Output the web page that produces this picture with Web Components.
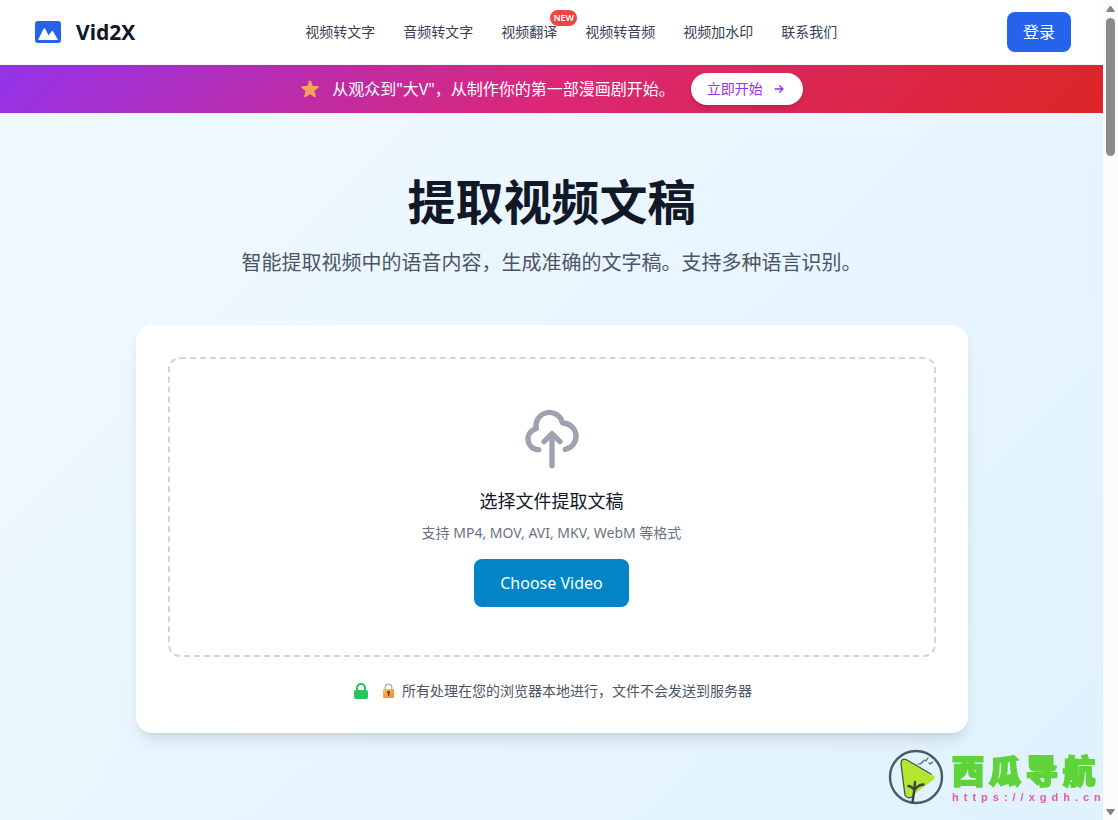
<!DOCTYPE html>
<html lang="zh-CN">
<head>
<meta charset="utf-8">
<meta name="viewport" content="width=device-width, initial-scale=1">
<title>Vid2X - 提取视频文稿</title>
<style>
  html, body { margin: 0; height: 100%; }
  body {
    font-family: "Noto Sans", "Noto Sans CJK SC", sans-serif;
    font-size: 16px; line-height: 24px; color: #111827; background: #fff;
  }
</style>
</head>
<body>
<page-shell>
  <site-header>
    <nav-item href="#video-text">视频转文字</nav-item>
    <nav-item href="#audio-text">音频转文字</nav-item>
    <nav-item href="#translate" badge="NEW">视频翻译</nav-item>
    <nav-item href="#video-audio">视频转音频</nav-item>
    <nav-item href="#watermark">视频加水印</nav-item>
    <nav-item href="#contact">联系我们</nav-item>
  </site-header>
  <promo-banner>从观众到"大V"，从制作你的第一部漫画剧开始。<span slot="action">立即开始</span></promo-banner>
  <hero-section>
    <span slot="title">提取视频文稿</span>
    <span slot="subtitle">智能提取视频中的语音内容，生成准确的文字稿。支持多种语言识别。</span>
    <upload-card>
      <span slot="title">选择文件提取文稿</span>
      <span slot="formats">支持 MP4, MOV, AVI, MKV, WebM 等格式</span>
      <span slot="button">Choose Video</span>
      <privacy-note slot="note">所有处理在您的浏览器本地进行，文件不会发送到服务器</privacy-note>
    </upload-card>
  </hero-section>
  <scroll-rail slot="rail"></scroll-rail>
</page-shell>
<site-mark></site-mark>

<script>
const define = (name, html, setup) => {
  const template = document.createElement('template');
  template.innerHTML = html;
  customElements.define(name, class extends HTMLElement {
    constructor() {
      super();
      this.attachShadow({ mode: 'open' }).append(template.content.cloneNode(true));
    }
    connectedCallback() { if (setup) setup(this, this.shadowRoot); }
  });
};

define('page-shell', `
  <style>
    :host { display: grid; grid-template-columns: minmax(0, 1fr) 15px; min-height: 100vh; }
    .page { display: flex; flex-direction: column; }
  </style>
  <div class="page"><slot></slot></div>
  <slot name="rail"></slot>`);

define('scroll-rail', `
  <style>
    :host { display: flex; flex-direction: column; align-items: center; gap: 5px;
      box-sizing: border-box; height: 100vh; padding: 5px 0 4px; position: sticky; top: 0; background: #fcfcfc; }
    svg { display: block; width: 9px; height: 8px; fill: #858585; flex: none; }
    .track { flex: 1; }
    .thumb { width: 9px; height: 17%; border-radius: 5px; background: #8b8b8b; }
  </style>
  <svg viewBox="0 0 9 8" aria-hidden="true"><path d="M4 1q.5-.6 1 0l3.8 5.2q.3.8-.6.8H.8q-.9 0-.6-.8z"/></svg>
  <div class="thumb"></div>
  <div class="track"></div>
  <svg viewBox="0 0 9 8" aria-hidden="true"><path d="M4 7q.5.6 1 0l3.800-5.200q.3-.8-.6-.8H.8q-.9 0-.6.8z"/></svg>`);

define('site-header', `
  <style>
    :host { display: block; background: #fff; border-bottom: 1px solid #f3f4f6; }
    header { display: flex; align-items: center; justify-content: space-between; height: 64px; padding: 0 32px; }
    .brand { display: flex; align-items: center; gap: 12px; color: #111827; text-decoration: none;
      font-size: 21px; line-height: 28px; font-weight: 700; }
    .brand svg { width: 32px; height: 32px; display: block; }
    nav { display: flex; gap: 28px; }
    button { border: 0; border-radius: 8px; background: #2563eb; color: #fff; font: inherit;
      padding: 8px 16px; cursor: pointer; }
  </style>
  <header>
    <a class="brand" href="#home">
      <svg viewBox="0 0 32 32" aria-hidden="true">
        <rect x="3" y="5" width="26" height="22" rx="3" fill="#2563eb"/>
        <path d="M6 24 11.600 12.800q.8-1.300 1.600 0L16.500 19.500l3.200-4.200q.7-.9 1.300 0L26 24z" fill="#fff"/>
      </svg>
      <span>Vid2X</span>
    </a>
    <nav><slot></slot></nav>
    <button type="button">登录</button>
  </header>`);

define('nav-item', `
  <style>
    :host { display: block; position: relative; font-size: 14px; line-height: 20px; }
    a { color: #374151; text-decoration: none; white-space: nowrap; }
    .badge { position: absolute; top: -12px; right: -20px; padding: 0 3px; border-radius: 8px;
      background: #ef4444; color: #fff; font-size: 9px; line-height: 16px; font-weight: 600; }
    .badge:empty { display: none; }
  </style>
  <a><slot></slot></a><span class="badge"></span>`,
  (host, root) => {
    root.querySelector('a').href = host.getAttribute('href') || '#';
    root.querySelector('.badge').textContent = host.getAttribute('badge') || '';
  });

define('promo-banner', `
  <style>
    :host { display: flex; align-items: center; justify-content: center; gap: 16px; padding: 8px 16px;
      background: linear-gradient(135deg, #9333ea, #db2777 50%, #dc2626); color: #fff; }
    .message { display: flex; align-items: center; gap: 12px; }
    .star { width: 20px; height: 20px; fill: #f3a35f; display: block; }
    a { display: flex; align-items: center; gap: 8px; padding: 6px 16px; border-radius: 16px; background: #fff;
      color: #9333ea; font-size: 14px; line-height: 20px; text-decoration: none; white-space: nowrap;
      box-shadow: 0 4px 6px -1px rgb(0 0 0 / .1), 0 2px 4px -2px rgb(0 0 0 / .1); }
    a svg { width: 16px; height: 16px; display: block; }
  </style>
  <div class="message">
    <svg class="star" viewBox="2 1 16 17" aria-hidden="true"><path d="M9.049 2.927c.3-.921 1.603-.921 1.902 0l1.07 3.292a1 1 0 00.95.69h3.462c.969 0 1.371 1.24.588 1.81l-2.8 2.034a1 1 0 00-.364 1.118l1.07 3.292c.3.921-.755 1.688-1.54 1.118l-2.8-2.034a1 1 0 00-1.175 0l-2.8 2.034c-.784.57-1.838-.197-1.539-1.118l1.07-3.292a1 1 0 00-.364-1.118L2.98 8.72c-.783-.57-.38-1.81.588-1.81h3.461a1 1 0 00.951-.69l1.07-3.292z"/></svg>
    <span><slot></slot></span>
  </div>
  <a href="#start"><slot name="action"></slot>
    <svg viewBox="0 0 24 24" fill="none" stroke="currentColor" stroke-width="2" stroke-linecap="round" stroke-linejoin="round" aria-hidden="true"><path d="M13 7l5 5m0 0l-5 5m5-5H6"/></svg>
  </a>`);

define('hero-section', `
  <style>
    :host { display: block; flex: 1; background: linear-gradient(135deg, #f0f9ff, #e0f2fe); }
    main { max-width: 832px; margin: 0 auto; padding: 64px 32px; }
    .intro { text-align: center; margin-bottom: 48px; }
    h1 { margin: 0 0 22px; font-size: 48px; line-height: 50px; font-weight: 700; color: #111827; }
    p { margin: 0; font-size: 20px; line-height: 28px; color: #4b5563; }
  </style>
  <main>
    <div class="intro">
      <h1><slot name="title"></slot></h1>
      <p><slot name="subtitle"></slot></p>
    </div>
    <slot></slot>
  </main>`);

define('upload-card', `
  <style>
    :host { display: block; padding: 32px; border-radius: 16px; background: #fff;
      box-shadow: 0 10px 15px -3px rgb(0 0 0 / .1), 0 4px 6px -4px rgb(0 0 0 / .1); }
    .drop { display: flex; flex-direction: column; align-items: center; padding: 48px;
      border: 2px dashed #d1d5db; border-radius: 12px; text-align: center; }
    svg { width: 64px; height: 64px; display: block; color: #9ca3af; }
    h2 { margin: 16px 0 8px; font-size: 18px; line-height: 28px; font-weight: 400; color: #111827; }
    p { margin: 0 0 16px; font-size: 14px; line-height: 20px; color: #6b7280; }
    button { border: 0; border-radius: 8px; background: #0284c7; color: #fff; font: inherit;
      padding: 12px 26px; cursor: pointer; }
    .note { margin-top: 24px; }
  </style>
  <div class="drop">
    <svg viewBox="0 0 24 24" fill="none" stroke="currentColor" stroke-width="2" stroke-linecap="round" stroke-linejoin="round" aria-hidden="true"><path d="M7 16a4 4 0 01-.88-7.903A5 5 0 1115.9 6L16 6a5 5 0 011 9.9M15 13l-3-3m0 0l-3 3m3-3v12"/></svg>
    <h2><slot name="title"></slot></h2>
    <p><slot name="formats"></slot></p>
    <button type="button"><slot name="button"></slot></button>
  </div>
  <div class="note"><slot name="note"></slot></div>`);

define('privacy-note', `
  <style>
    :host { display: flex; align-items: center; justify-content: center; gap: 8px;
      font-size: 14px; line-height: 20px; color: #4b5563; }
    .shield { width: 20px; height: 20px; fill: #22c55e; display: block; }
    .text { display: flex; align-items: center; gap: 4px; }
    .padlock { width: 19px; height: 20px; display: block; }
  </style>
  <svg class="shield" viewBox="0 0 20 20" aria-hidden="true"><path fill-rule="evenodd" d="M5 9V7a5 5 0 0110 0v2a2 2 0 012 2v5a2 2 0 01-2 2H5a2 2 0 01-2-2v-5a2 2 0 012-2zm8-2v2H7V7a3 3 0 016 0z"/></svg>
  <span class="text">
    <svg class="padlock" viewBox="0 0 19 20" role="img" aria-label="锁">
      <defs><linearGradient id="gold" x1="0" y1="0" x2="1" y2="1"><stop stop-color="#fbc04a"/><stop offset="1" stop-color="#ee8a3c"/></linearGradient></defs>
      <path d="M6.2 9V6.6a3.3 3.3 0 016.6 0V9" fill="none" stroke="#b9b4b6" stroke-width="1.4"/>
      <rect x="4" y="8" width="11" height="9" rx="1" fill="url(#gold)"/>
      <circle cx="9.5" cy="11.4" r="1.4" fill="#5a3a2c"/><path d="M9 11.5h1.2v3.6H9z" fill="#5a3a2c"/>
    </svg>
    <span><slot></slot></span>
  </span>`);

define('site-mark', `
  <style>
    :host { position: fixed; right: 18px; bottom: 15px; display: flex; align-items: center; gap: 8px; pointer-events: none; }
    svg { width: 56px; height: 56px; display: block; }
    .words { display: flex; flex-direction: column; width: 148px; }
    .name { font-size: 32px; line-height: 40px; font-weight: 900; letter-spacing: 5px; color: #5fd43a; -webkit-text-stroke: 2px #5fd43a; white-space: nowrap; }
    .url { font-family: "Liberation Sans", sans-serif; font-size: 11px; line-height: 12px; letter-spacing: 5px; color: #ea5a9b; white-space: nowrap; font-weight: 700; }
  </style>
  <svg viewBox="0 0 56 56" aria-hidden="true">
    <circle cx="28" cy="28" r="26" fill="none" stroke="#4b5964" stroke-width="2.4"/>
    <path d="M13 14q0-6 6-3L45 26q4 2.500 0 5L24 47q-6 3-7-3z" fill="#b5e52f"/>
    <path d="M26 47q-7 4-9-1L13 15q0-7 6-4l24 14" fill="none" stroke="#44525a" stroke-width="1.3" stroke-linecap="round"/>
    <path d="M24.500 53q2-11 2.500-20m-.5 9q-1.500-4-6-5m6 4q3-5 9-5.500" fill="none" stroke="#384447" stroke-width="2.4" stroke-linecap="round"/>
    <path d="M30 15l2.500 0 3-3m1-1 1.500 1 2-3m1 5 1.500 1 2-2" fill="none" stroke="#52606a" stroke-width="1.2" stroke-linecap="round"/>
  </svg>
  <div class="words"><span class="name">西瓜导航</span><span class="url">https://xgdh.cn</span></div>`);
</script>
</body>
</html>
